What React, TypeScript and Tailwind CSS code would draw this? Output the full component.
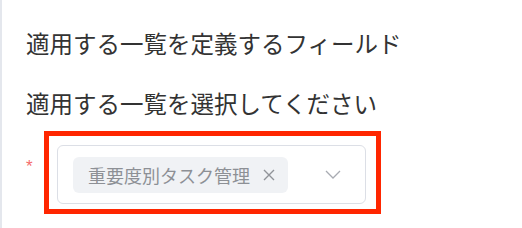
import React from "react";

const jp = { fontFamily: '"Noto Sans CJK JP", "Noto Sans", sans-serif' };

export default function App() {
  return (
    <div className="w-[522px] h-[228px] bg-white border-l-2 border-[#e4e7ed] pl-[24px] overflow-hidden" style={jp}>
      <div className="pt-[30px] h-[56px] text-[23.5px] leading-[26px] text-[#333333] whitespace-nowrap">
        適用する一覧を定義するフィールド
      </div>
      <div className="mt-[34px] h-[26px] text-[23.5px] leading-[26px] text-[#333333] whitespace-nowrap">
        適用する一覧を選択してください
      </div>
      <div className="mt-[15px] flex items-start">
        <span className="w-[18px] mt-[29px] text-[17px] leading-[14px] text-[#f56c6c]" style={{ fontFamily: '"Liberation Sans", sans-serif' }}>
          *
        </span>
        <div className="w-[337px] h-[83px] border-[5px] border-[#ff2600] pl-[8px] pt-[9px]">
          <div className="w-[309px] h-[59px] border border-[#dcdfe6] rounded-[6px] flex items-center pl-[15px] pr-[24px]">
            <div className="h-[36px] w-[215px] bg-[#f0f2f5] rounded-[6px] flex items-center pl-[15px] pr-[13px] justify-between">
              <span className="text-[18px] leading-[20px] text-[#8d9095] whitespace-nowrap">重要度別タスク管理</span>
              <svg width="12" height="12" viewBox="0 0 12 12" className="text-[#909399]">
                <path d="M1 1L11 11M11 1L1 11" stroke="currentColor" strokeWidth="1.4" fill="none" />
              </svg>
            </div>
            <svg width="16" height="9" viewBox="0 0 16 9" className="ml-auto text-[#a8abb2]">
              <path d="M1 1L8 8L15 1" stroke="currentColor" strokeWidth="1.3" fill="none" />
            </svg>
          </div>
        </div>
      </div>
    </div>
  );
}
